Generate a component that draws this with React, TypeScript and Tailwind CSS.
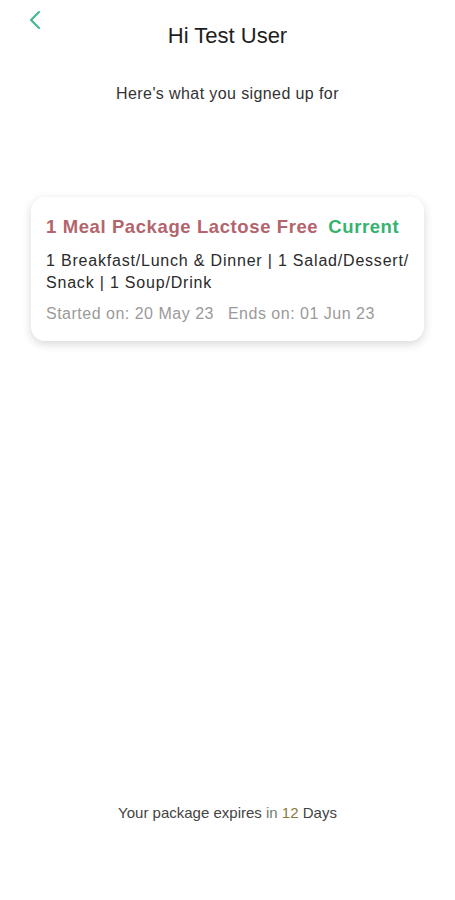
import { ChevronLeft } from "lucide-react";

export default function App() {
  return (
    <div className="w-[455px] h-[900px] bg-white flex flex-col font-['Liberation_Sans',sans-serif] text-[#222]">
      <header className="relative h-[70px] flex items-center justify-center">
        <button className="absolute left-[19px] top-[4px] text-[#3fb68b]">
          <ChevronLeft size={32} strokeWidth={1.5} />
        </button>
        <h1 className="text-[22px] text-[#1e1e1e]">Hi Test User</h1>
      </header>

      <p className="mt-[12px] text-center text-[16px] tracking-[0.4px] text-[#333]">Here's what you signed up for</p>

      <div className="mt-[91px] mx-[31px] rounded-[14px] bg-white px-[15px] pt-[16px] pb-[15px] shadow-[0_3px_10px_rgba(0,0,0,0.16)]">
        <div className="flex items-baseline gap-[10px] text-[18.5px] tracking-[0.6px] font-bold">
          <span className="text-[#b3646c]">1 Meal Package Lactose Free</span>
          <span className="text-[#34b36f]">Current</span>
        </div>
        <p className="mt-[9px] text-[16px] leading-[22px] tracking-[0.8px] text-[#2a2a2a]">
          1 Breakfast/Lunch &amp; Dinner | 1 Salad/Dessert/ Snack | 1 Soup/Drink
        </p>
        <div className="mt-[8px] flex gap-[14px] text-[16px] tracking-[0.5px] text-[#9a9a9a]">
          <span>Started on: 20 May 23</span>
          <span>Ends on: 01 Jun 23</span>
        </div>
      </div>

      <div className="flex-1" />

      <p className="mb-[76px] text-center text-[15px] text-[#444]">
        Your package expires <span className="text-[#6f7c6c]">in</span>{" "}
        <span className="text-[#8a7a3c]">12</span> Days
      </p>
    </div>
  );
}
